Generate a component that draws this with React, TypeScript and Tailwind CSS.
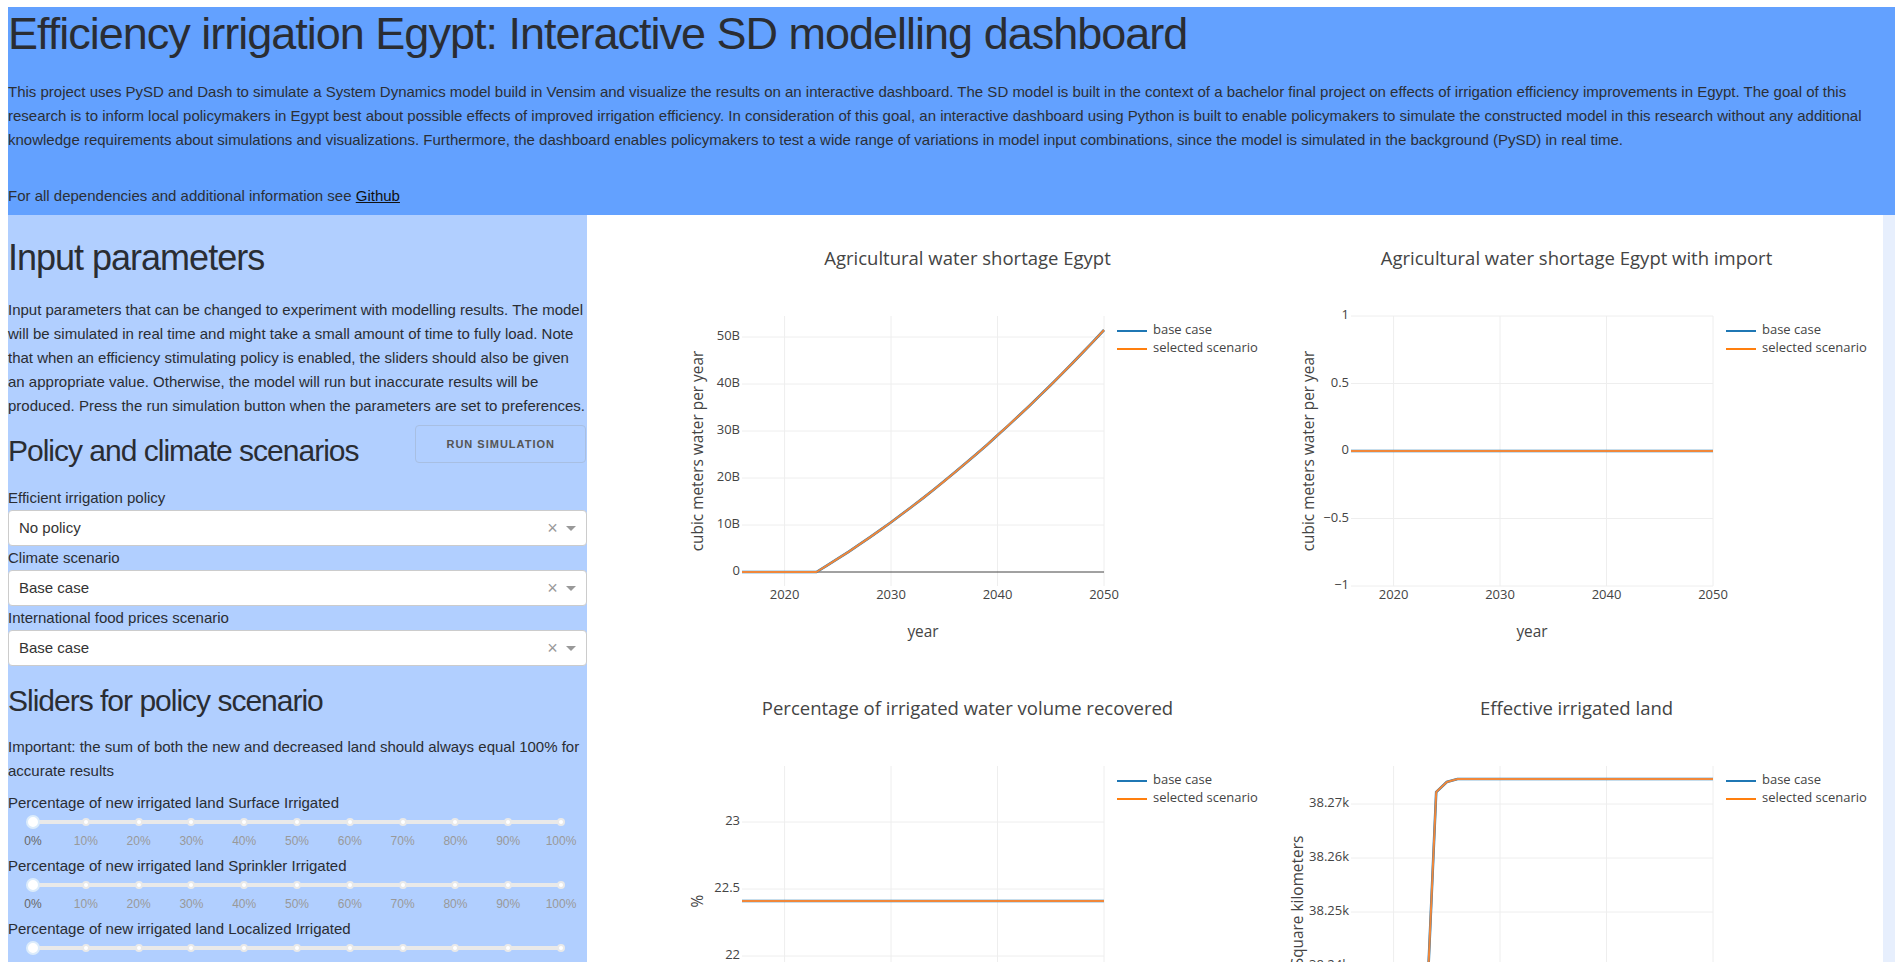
import React from 'react';

const MARKS = [0, 10, 20, 30, 40, 50, 60, 70, 80, 90, 100];
const YEARS = [2020, 2030, 2040, 2050];

// plot area inside each 609x450 figure
const PL = 79;
const PR = 441;
const PT = 100;
const PB = 370;
const xOf = (t: number) => PL + ((t - 2016) * (PR - PL)) / 34;

type Tick = { y: number; label: string };
type Pt = [number, number];

function range(a: number, b: number) {
  const out: number[] = [];
  for (let i = a; i <= b; i++) out.push(i);
  return out;
}

// chart 1: water shortage in billions, rising after 2023
const shortage: Pt[] = range(2016, 2050).map(t => {
  const x = Math.max(0, t - 2023);
  const v = 1.376 * x + 0.01967 * x * x;
  return [xOf(t), 356 - v * 4.7];
});

const flat = (y: number): Pt[] => [[xOf(2016), y], [xOf(2050), y]];

const land: Pt[] = [
  [xOf(2016), 368],
  [xOf(2023), 368],
  [xOf(2024), 126],
  [xOf(2025), 116],
  [xOf(2026), 113],
  [xOf(2050), 113],
];

const pts = (p: Pt[]) => p.map(([x, y]) => `${x.toFixed(1)},${y.toFixed(1)}`).join(' ');

function Chart({
  title,
  yTitle,
  yTitleX = 36,
  ticks,
  zero,
  data,
}: {
  title: string;
  yTitle: string;
  yTitleX?: number;
  ticks: Tick[];
  zero?: number;
  data: Pt[];
}) {
  return (
    <svg width={609} height={450} className="block font-['Open_Sans',Verdana,Arial,sans-serif]">
      <text x={304.5} y={44} textAnchor="middle" dominantBaseline="middle" fontSize={18.5} fill="#444">
        {title}
      </text>

      {/* grid */}
      {YEARS.map(t => (
        <line key={t} x1={xOf(t)} x2={xOf(t)} y1={PT} y2={PB} stroke="#eee" strokeWidth={1} />
      ))}
      {ticks.map(tk => (
        <line key={tk.label} x1={PL} x2={PR} y1={tk.y} y2={tk.y} stroke="#eee" strokeWidth={1} />
      ))}
      {zero !== undefined && <line x1={PL} x2={PR} y1={zero} y2={zero} stroke="#444" strokeWidth={1} />}

      {/* traces: base case under selected scenario */}
      <polyline points={pts(data)} fill="none" stroke="#1f77b4" strokeWidth={2.6} />
      <polyline points={pts(data)} fill="none" stroke="#f0873a" strokeWidth={2} strokeLinejoin="round" />

      {/* axes labels */}
      {ticks.map(tk => (
        <text key={tk.label} x={77} y={tk.y} textAnchor="end" dominantBaseline="middle" fontSize={13} fill="#444">
          {tk.label}
        </text>
      ))}
      {zero !== undefined && (
        <text x={77} y={zero} textAnchor="end" dominantBaseline="middle" fontSize={13} fill="#444">
          0
        </text>
      )}
      {YEARS.map(t => (
        <text key={t} x={xOf(t)} y={380} textAnchor="middle" dominantBaseline="middle" fontSize={13} fill="#444">
          {t}
        </text>
      ))}
      <text x={(PL + PR) / 2} y={417} textAnchor="middle" dominantBaseline="middle" fontSize={15.4} fill="#444">
        year
      </text>
      <text
        x={yTitleX}
        y={(PT + PB) / 2}
        transform={`rotate(-90 ${yTitleX} ${(PT + PB) / 2})`}
        textAnchor="middle"
        dominantBaseline="middle"
        fontSize={15.4}
        fill="#444"
      >
        {yTitle}
      </text>

      {/* legend */}
      <line x1={454} x2={484} y1={115} y2={115} stroke="#1f77b4" strokeWidth={2} />
      <text x={490} y={115} dominantBaseline="middle" fontSize={13} fill="#444">base case</text>
      <line x1={454} x2={484} y1={133} y2={133} stroke="#ff7f0e" strokeWidth={2} />
      <text x={490} y={133} dominantBaseline="middle" fontSize={13} fill="#444">selected scenario</text>
    </svg>
  );
}

function Dropdown({ value }: { value: string }) {
  return (
    <div className="flex h-9 items-center rounded border border-[#ccc] bg-white pl-[10px] text-[15px] text-[#333]">
      <span className="flex-1">{value}</span>
      <span className="w-[17px] text-center text-[18px] leading-none text-[#999]">×</span>
      <span className="flex w-[25px] justify-center pr-[5px]">
        <span className="h-0 w-0 border-x-[5px] border-t-[5px] border-x-transparent border-t-[#999]" />
      </span>
    </div>
  );
}

function Slider({ label }: { label: string }) {
  return (
    <div>
      <p className="text-[15px] leading-6">{label}</p>
      <div className="h-[39px] pt-[5px]">
        <div className="relative mx-[25px] w-[528px]">
          <div className="h-1 rounded-full bg-[#e9e9e9]" />
          {MARKS.map(m => (
            <span
              key={m}
              className="absolute top-[2px] h-2 w-2 -translate-x-1/2 -translate-y-1/2 rounded-full border-2 border-[#e9e9e9] bg-white"
              style={{ left: `${m}%` }}
            />
          ))}
          <span className="absolute left-0 top-[2px] h-[14px] w-[14px] -translate-x-1/2 -translate-y-1/2 rounded-full border-2 border-[#dcecfb] bg-white" />
          <div className="relative mt-[10px] h-[14px] text-xs leading-[14px]">
            {MARKS.map(m => (
              <span
                key={m}
                className={`absolute top-0 -translate-x-1/2 ${m === 0 ? 'text-[#666]' : 'text-[#999]'}`}
                style={{ left: `${m}%` }}
              >
                {m}%
              </span>
            ))}
          </div>
        </div>
      </div>
    </div>
  );
}

export default function App() {
  return (
    <div className="h-[962px] w-[1898px] overflow-hidden bg-white pl-2 pt-[7px] font-['Liberation_Sans',Arial,sans-serif] text-[#222]">
      <div className="w-[1887px]">
        {/* Header */}
        <header className="bg-[#63a1ff] pt-1 pb-[7px]">
          <h1 className="text-[45px] leading-[45px] tracking-[-1px] text-[#2a2d33]">
            Efficiency irrigation Egypt: Interactive SD modelling dashboard
          </h1>
          <p className="mt-6 text-[15px] leading-6 text-[#2b2f36]">
            This project uses PySD and Dash to simulate a System Dynamics model build in Vensim and visualize the
            results on an interactive dashboard. The SD model is built in the context of a bachelor final project on
            effects of irrigation efficiency improvements in Egypt. The goal of this research is to inform local
            policymakers in Egypt best about possible effects of improved irrigation efficiency. In consideration of
            this goal, an interactive dashboard using Python is built to enable policymakers to simulate the
            constructed model in this research without any additional knowledge requirements about simulations and
            visualizations. Furthermore, the dashboard enables policymakers to test a wide range of variations in model
            input combinations, since the model is simulated in the background (PySD) in real time.
          </p>
          <p className="mt-8 text-[15px] leading-6 text-[#2b2f36]">
            For all dependencies and additional information see <a className="text-[#111] underline">Github</a>
          </p>
        </header>

        <div className="flex">
          {/* Input column */}
          <aside className="w-[579px] shrink-0 bg-[#b1cfff] pb-10 text-[#2a2d33]">
            <h2 className="mt-[21px] text-[36px] leading-[44px] tracking-[-1px]">Input parameters</h2>
            <p className="mt-[18px] text-[15px] leading-6">
              Input parameters that can be changed to experiment with modelling results. The model will be simulated
              in real time and might take a small amount of time to fully load. Note that when an efficiency
              stimulating policy is enabled, the sliders should also be given an appropriate value. Otherwise, the
              model will run but inaccurate results will be produced. Press the run simulation button when the
              parameters are set to preferences.
            </p>

            <div className="mt-[7px] flex items-start justify-between">
              <h3 className="mt-[7px] text-[30px] leading-[38px] tracking-[-1px]">Policy and climate scenarios</h3>
              <button className="mr-px h-[38px] rounded border border-[#a8bfe2] px-[30px] text-[11px] font-bold uppercase tracking-[1px] text-[#555]">
                Run simulation
              </button>
            </div>

            <p className="mt-4 text-[15px] leading-6">Efficient irrigation policy</p>
            <Dropdown value="No policy" />
            <p className="text-[15px] leading-6">Climate scenario</p>
            <Dropdown value="Base case" />
            <p className="text-[15px] leading-6">International food prices scenario</p>
            <Dropdown value="Base case" />

            <h3 className="mt-4 text-[30px] leading-[38px] tracking-[-1px]">Sliders for policy scenario</h3>
            <p className="mt-[15px] text-[15px] leading-6">
              Important: the sum of both the new and decreased land should always equal 100% for accurate results
            </p>
            <div className="mt-2">
              <Slider label="Percentage of new irrigated land Surface Irrigated" />
              <Slider label="Percentage of new irrigated land Sprinkler Irrigated" />
              <Slider label="Percentage of new irrigated land Localized Irrigated" />
            </div>
          </aside>

          {/* Charts */}
          <main className="grid flex-1 grid-cols-[609px_609px] content-start bg-white pl-[76px] pt-px">
            <Chart
              title="Agricultural water shortage Egypt"
              yTitle="cubic meters water per year"
              ticks={[10, 20, 30, 40, 50].map(v => ({ y: 356 - v * 4.7, label: `${v}B` }))}
              zero={356}
              data={shortage}
            />
            <Chart
              title="Agricultural water shortage Egypt with import"
              yTitle="cubic meters water per year"
              yTitleX={38}
              ticks={[
                { y: 100, label: '1' },
                { y: 167.5, label: '0.5' },
                { y: 302.5, label: '\u22120.5' },
                { y: 370, label: '\u22121' },
              ]}
              zero={235}
              data={flat(235)}
            />
            <Chart
              title="Percentage of irrigated water volume recovered"
              yTitle="%"
              ticks={[
                { y: 156, label: '23' },
                { y: 223, label: '22.5' },
                { y: 290, label: '22' },
              ]}
              data={flat(235)}
            />
            <Chart
              title="Effective irrigated land"
              yTitle="Square kilometers"
              yTitleX={27}
              ticks={[
                { y: 138, label: '38.27k' },
                { y: 192, label: '38.26k' },
                { y: 246, label: '38.25k' },
                { y: 300, label: '38.24k' },
              ]}
              data={land}
            />
          </main>

          <div className="w-3 shrink-0 bg-[#e7effd]" />
        </div>
      </div>
    </div>
  );
}
